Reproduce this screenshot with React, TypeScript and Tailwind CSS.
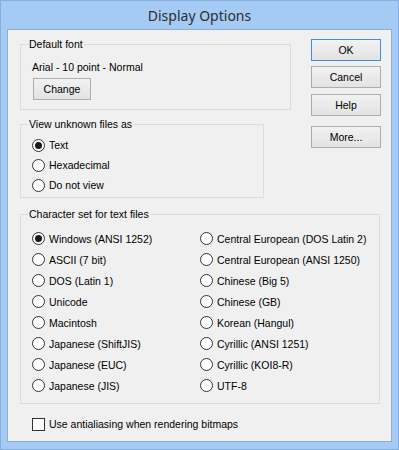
import React from "react";

const leftSets = [
  "Windows (ANSI 1252)",
  "ASCII (7 bit)",
  "DOS (Latin 1)",
  "Unicode",
  "Macintosh",
  "Japanese (ShiftJIS)",
  "Japanese (EUC)",
  "Japanese (JIS)",
];

const rightSets = [
  "Central European (DOS Latin 2)",
  "Central European (ANSI 1250)",
  "Chinese (Big 5)",
  "Chinese (GB)",
  "Korean (Hangul)",
  "Cyrillic (ANSI 1251)",
  "Cyrillic (KOI8-R)",
  "UTF-8",
];

function Radio({ label, checked, rowClass }: { label: string; checked?: boolean; rowClass: string }) {
  return (
    <div className={`flex items-center ${rowClass}`}>
      <span className="w-[13px] h-[13px] shrink-0 rounded-full border border-[#333] bg-white flex items-center justify-center">
        {checked && <span className="w-[7px] h-[7px] rounded-full bg-[#1a1a1a]" />}
      </span>
      <span className="ml-[4px] whitespace-nowrap">{label}</span>
    </div>
  );
}

function WinButton({ children, primary, className = "" }: { children: React.ReactNode; primary?: boolean; className?: string }) {
  return (
    <button
      type="button"
      className={`w-[70px] h-[22px] flex items-center justify-center bg-gradient-to-b from-[#f2f2f2] to-[#e3e3e3] border ${
        primary ? "border-[#3c8fe0]" : "border-[#adadad]"
      } text-black ${className}`}
    >
      {children}
    </button>
  );
}

export default function App() {
  return (
    <div className="w-[399px] h-[450px] bg-[#a5cbf4] border border-[#84afe0] flex flex-col font-['Liberation_Sans',Arial,sans-serif] text-[10.5px] leading-[14px] text-black">
      {/* title bar */}
      <div className="h-[28px] flex items-center justify-center pt-[1px] font-['Noto_Sans',sans-serif] text-[14px] text-[#2e2e2e]">
        Display Options
      </div>

      {/* client area */}
      <div className="mx-[6px] h-[413px] border border-[#8eaed0] bg-[#f0f0f0] pl-[12px]">
        <div className="flex">
          <div className="flex flex-col">
            <fieldset className="mt-[7px] w-[271px] h-[73px] border border-[#dcdcdc]">
              <legend className="ml-[7px] px-[1px]">Default font</legend>
              <div className="pl-[11px] pt-[9px]">
                <div>Arial - 10 point - Normal</div>
                <WinButton className="mt-[4px] !w-[58px] ml-[1px]">Change</WinButton>
              </div>
            </fieldset>

            <fieldset className="mt-[7px] w-[244px] h-[81px] border border-[#dcdcdc]">
              <legend className="ml-[7px] px-[1px]">View unknown files as</legend>
              <div className="pl-[11px] pt-[4px]">
                <Radio label="Text" checked rowClass="h-[20px]" />
                <Radio label="Hexadecimal" rowClass="h-[20px]" />
                <Radio label="Do not view" rowClass="h-[20px]" />
              </div>
            </fieldset>
          </div>

          <div className="ml-[20px] pt-[9px] flex flex-col">
            <WinButton primary>OK</WinButton>
            <WinButton className="mt-[5px]">Cancel</WinButton>
            <WinButton className="mt-[6px]">Help</WinButton>
            <WinButton className="mt-[10px]">More...</WinButton>
          </div>
        </div>

        <fieldset className="mt-[9px] w-[360px] h-[197px] border border-[#dcdcdc]">
          <legend className="ml-[7px] px-[1px]">Character set for text files</legend>
          <div className="pl-[11px] pt-[7px] grid grid-cols-[168px_1fr]">
            <div className="flex flex-col">
              {leftSets.map((s, i) => (
                <Radio key={s} label={s} checked={i === 0} rowClass="h-[21px]" />
              ))}
            </div>
            <div className="flex flex-col">
              {rightSets.map((s) => (
                <Radio key={s} label={s} rowClass="h-[21px]" />
              ))}
            </div>
          </div>
        </fieldset>

        <div className="mt-[12px] ml-[12px] h-[16px] flex items-center">
          <span className="w-[13px] h-[13px] border border-[#333] bg-white shrink-0" />
          <span className="ml-[4px]">Use antialiasing when rendering bitmaps</span>
        </div>
      </div>
    </div>
  );
}
